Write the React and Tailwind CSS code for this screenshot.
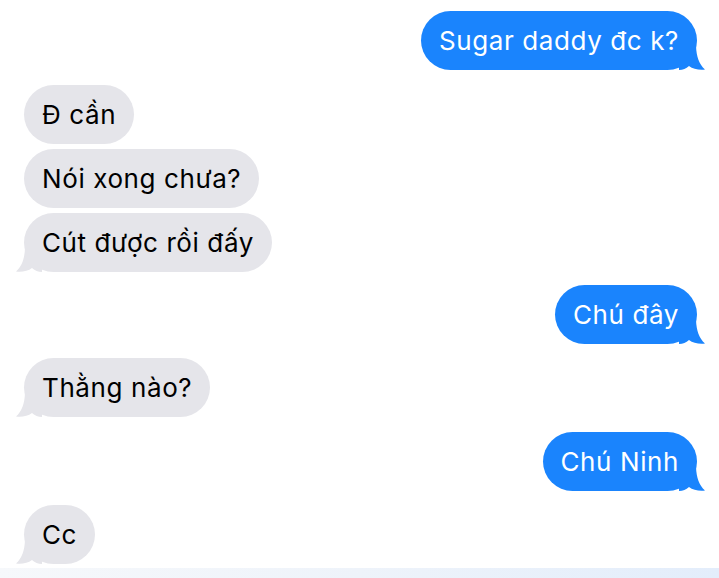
import React from 'react';

const BLUE = '#1a84fd';
const GRAY = '#e5e5ea';

const Tail = ({ side, color }) => {
    // small curled tail at the bottom corner of a bubble
    const isRight = side === 'right';
    return (
        <svg
            width="26"
            height="26"
            viewBox="0 0 26 26"
            className={`absolute bottom-0 ${isRight ? 'right-[-8px]' : 'left-[-8px] -scale-x-100'}`}
        >
            <path
                d="M0 26 L0 2 L17 2 C17.5 13 20 20 26 25.6 C20 26.4 14 25 10 22 C7 24.5 4 26 0 26 Z"
                fill={color}
            />
        </svg>
    );
};

const Bubble = ({ text, mine, tail, className = '' }) => (
    <div className={`flex ${mine ? 'justify-end pr-[22px]' : 'justify-start pl-[24px]'} ${className}`}>
        <div
            className={`relative h-[59px] flex items-center px-[18px] rounded-[30px] text-[26px] tracking-[0.6px] ${
                mine ? 'bg-[#1a84fd] text-white' : 'bg-[#e5e5ea] text-black'
            }`}
        >
            <span className="relative z-10 whitespace-nowrap">{text}</span>
            {tail && <Tail side={mine ? 'right' : 'left'} color={mine ? BLUE : GRAY} />}
        </div>
    </div>
);

export default function App() {
    return (
        <div
            className="w-[719px] h-[578px] bg-white flex flex-col overflow-hidden"
            style={{ fontFamily: 'Inter, "Noto Sans", sans-serif' }}
        >
            <div className="flex-1 flex flex-col pt-[11px]">
                <Bubble text="Sugar daddy đc k?" mine tail />
                <Bubble text="Đ cần" className="mt-[15px]" />
                <Bubble text="Nói xong chưa?" className="mt-[5px]" />
                <Bubble text="Cút được rồi đấy" tail className="mt-[5px]" />
                <Bubble text="Chú đây" mine tail className="mt-[13px]" />
                <Bubble text="Thằng nào?" tail className="mt-[14px]" />
                <Bubble text="Chú Ninh" mine tail className="mt-[15px]" />
                <Bubble text="Cc" tail className="mt-[14px]" />
            </div>
            <div className="h-[10px] bg-gradient-to-r from-[#f6f8fb] via-[#eef3fa] to-[#e3edfb]" />
        </div>
    );
}
